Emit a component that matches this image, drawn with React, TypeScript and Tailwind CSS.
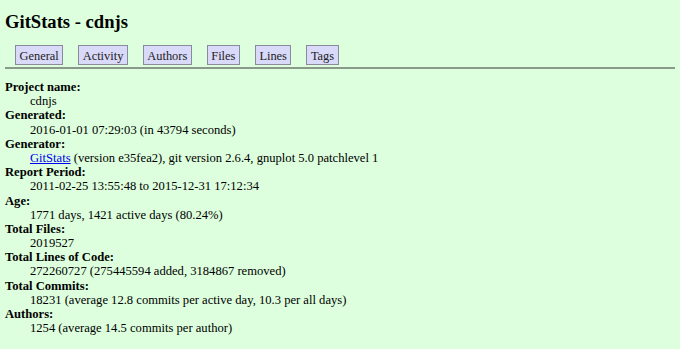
import React from "react";

const tabs = ["General", "Activity", "Authors", "Files", "Lines", "Tags"];

const rows: [string, React.ReactNode][] = [
  ["Project name", "cdnjs"],
  ["Generated", "2016-01-01 07:29:03 (in 43794 seconds)"],
  [
    "Generator",
    <>
      <a href="#" className="text-[#0000ee] underline">GitStats</a> (version e35fea2), git version 2.6.4, gnuplot 5.0 patchlevel 1
    </>,
  ],
  ["Report Period", "2011-02-25 13:55:48 to 2015-12-31 17:12:34"],
  ["Age", "1771 days, 1421 active days (80.24%)"],
  ["Total Files", "2019527"],
  ["Total Lines of Code", "272260727 (275445594 added, 3184867 removed)"],
  ["Total Commits", "18231 (average 12.8 commits per active day, 10.3 per all days)"],
  ["Authors", "1254 (average 14.5 commits per author)"],
];

export default function App() {
  return (
    <div
      className="w-[680px] h-[349px] bg-[#dfd] text-black px-[5px] overflow-hidden"
      style={{ fontFamily: '"Liberation Serif", "Times New Roman", serif' }}
    >
      <h1 className="text-[18.6px] font-bold leading-[24px] pt-[10px]">GitStats - cdnjs</h1>
      <div className="mt-[11px] mb-[2px] flex pl-[10px] gap-[15px]">
        {tabs.map((t) => (
          <div
            key={t}
            className="border border-[#8a8a9a] bg-[#d9d9f9] px-[3.5px] pt-[3px] h-[20px] text-[12.4px] leading-[14px] text-[#222]"
          >
            {t}
          </div>
        ))}
      </div>
      <div className="h-[2px] bg-[#8a9a8a] w-[670px]" />
      <div className="mt-[11px] text-[12.6px] leading-[14.2px]">
        {rows.map(([k, v]) => (
          <div key={k}>
            <div className="font-bold h-[14.2px] whitespace-nowrap">{k}:</div>
            <div className="pl-[25px] h-[14.2px] whitespace-nowrap">{v}</div>
          </div>
        ))}
      </div>
    </div>
  );
}
